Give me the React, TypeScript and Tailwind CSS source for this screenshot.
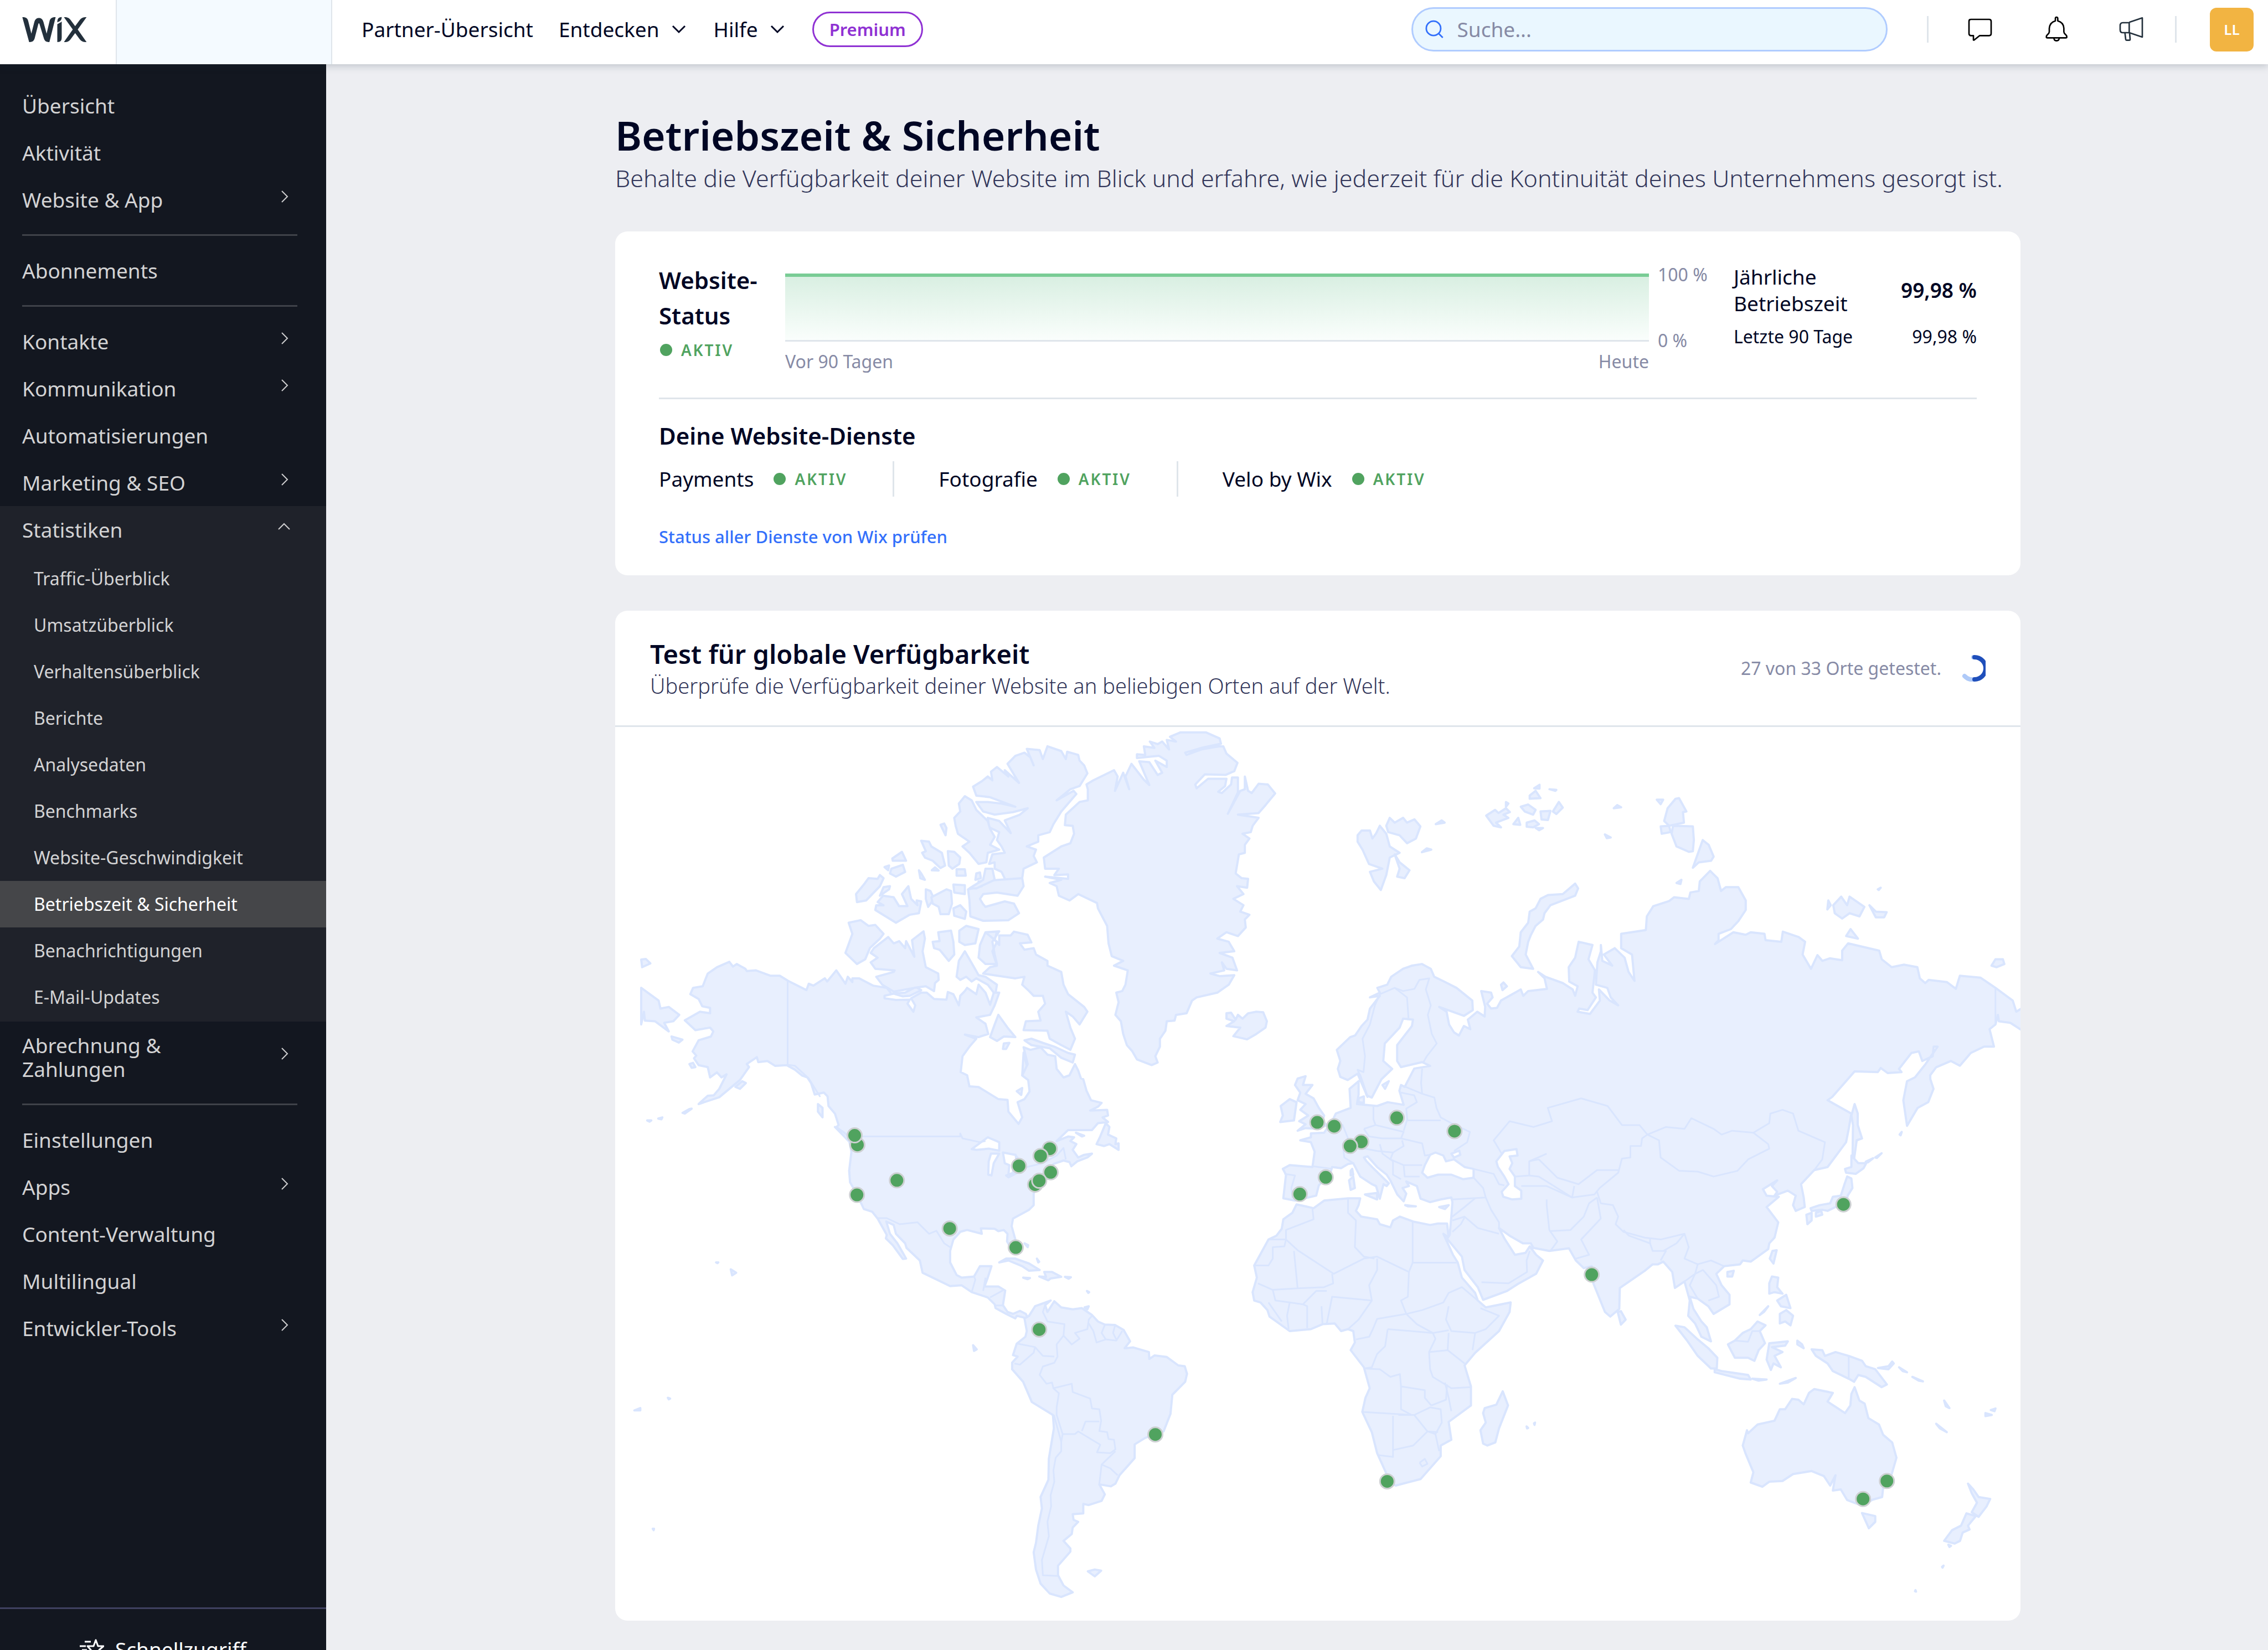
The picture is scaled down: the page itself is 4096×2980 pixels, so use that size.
import React from "react";

/* ---------- World map data ---------- */

type Tile = { x: number; y: number; sx: number; sy: number };

// Outlines are digitised in four quadrants; each has its own origin and scale on the map.
const TILES: Record<string, Tile> = {
  nw: { x: -11, y: -232, sx: 0.829, sy: 0.574 },
  ne: { x: 1189, y: -232, sx: 0.893, sy: 0.574 },
  sw: { x: -11, y: 588, sx: 0.829, sy: 0.689 },
  se: { x: 1089, y: 588, sx: 0.957, sy: 0.689 },
};

function toPath(source: string, closed: boolean): string {
  let tile = TILES.nw;
  const points: string[] = [];
  for (const token of source.trim().split(/\s+/)) {
    if (TILES[token]) {
      tile = TILES[token];
      continue;
    }
    const [u, v] = token.split(",").map(Number);
    points.push(`${(tile.x + u * tile.sx).toFixed(1)} ${(tile.y + v * tile.sy).toFixed(1)}`);
  }
  return `M${points.join("L")}${closed ? "Z" : ""}`;
}

const LAND: string[] = [
  // North and Central America
  `nw 262,1143 270,1158 278,1150 297,1165 300,1172 320,1170 352,1187 372,1187 390,1203 430,1232 435,1212 445,1218 470,1195 475,1205 495,1170 515,1212 520,1190 530,1207 530,1195 545,1195 575,1218 605,1225 615,1243 645,1240 668,1222 680,1232 655,1250 640,1252 620,1243 600,1250 600,1258 625,1263 655,1262 650,1275 663,1300 667,1280 658,1258 680,1240 692,1240 708,1260 735,1262 738,1238 750,1245 762,1280 765,1250 775,1235 780,1225 800,1245 805,1215 820,1240 830,1278 838,1240 825,1215 800,1195 790,1205 778,1190 765,1200 757,1190 762,1140 775,1110 795,1160 805,1185 820,1190 845,1215 842,1240 850,1240 840,1280 830,1310 800,1318 820,1338 826,1370 805,1380 775,1372 800,1385 785,1410 770,1440 766,1490 780,1500 785,1535 805,1537
   sw 848,122 868,124 870,155 892,187 900,170 890,130 905,122 916,102 913,72 900,60 910,35 903,0
   nw 900,1500 912,1465 903,1412 918,1420 940,1412 955,1435 972,1440 975,1480 990,1507 1003,1500 1015,1465 1022,1485 1028,1510
   sw 1033,70 1040,100 1050,125 1073,132 1065,142 1048,152 1085,150 1087,165 1075,170 1087,182 1065,185 1052,203 1000,203 975,232 1000,220 1013,222 1005,232 1018,240 1010,255 1022,275 1035,268 1052,265 1042,275 1020,285 1007,298 1003,287 990,283 968,292 960,315 945,325 932,350 925,370 925,400 915,412 880,435 877,455 885,490 888,515 878,518 867,495 868,475 860,465 848,468 840,462 810,461 812,475 780,465 765,470 750,490 743,520 743,550 757,583 768,590 795,587 808,560 833,560 825,590 818,613 848,613 863,624 858,662 868,680 880,685 895,677 908,685 912,695 905,695 888,690 885,697 865,685 842,670 840,660 825,642 790,628 768,610 743,612 683,577 677,545 648,512 645,500 625,475 620,452 604,443 612,475 628,500 640,525 647,540 640,541 618,505 603,487 605,478 585,435 573,417 555,410 540,372 525,340 523,310 528,260 522,225 510,210 495,195 500,190 492,160 478,140 476,115 468,105 448,110 440,80 432,65 420,60 405,45 387,33 362,35 345,22 325,25 322,12 300,30 305,38 285,72 240,117 195,135 215,113 228,112 240,95 256,57 245,65 235,52 220,65 215,38 195,33 185,15 190,8
   nw 182,1425 195,1390 222,1378 227,1362 220,1350 188,1358 165,1327 198,1300 220,1305 220,1288 203,1283 195,1260 177,1245 183,1225 204,1220 215,1180 235,1160`,
  // Greenland
  `nw 1055,572 1100,540 1108,560 1102,605 1120,548 1133,600 1125,560 1138,520 1165,570 1177,587 1155,512 1177,515 1195,555 1205,548 1190,510 1215,530 1215,510 1198,495 1150,502 1150,490 1168,492 1165,465 1188,470 1178,450 1195,458 1205,450 1220,475 1215,445 1235,450 1222,435 1245,421 1300,421 1330,440 1333,457 1290,470 1255,485 1258,492 1290,475 1330,465 1338,465 1345,488 1369,517 1362,543 1343,555 1298,553 1277,585 1280,597 1305,567 1345,567 1342,590 1327,608 1335,612 1355,585 1357,563 1370,563 1370,610 1348,677 1375,605 1385,600 1385,560 1392,605 1400,612 1415,583 1435,585 1451,613 1430,650 1415,675 1370,680 1415,690 1402,715 1398,735 1380,740 1395,755 1385,775 1385,800 1372,805 1365,865 1378,880 1392,882 1390,910 1368,905 1382,930 1360,945 1382,965 1375,985 1395,995 1385,1010 1387,1035 1370,1062 1345,1050 1325,1070 1350,1080 1362,1110 1330,1115 1358,1130 1368,1170 1345,1165 1335,1145 1340,1170 1310,1180 1330,1188 1362,1185 1350,1215 1325,1240 1280,1255 1270,1265 1258,1305 1235,1310 1232,1328 1215,1330 1212,1360 1200,1385 1200,1410 1190,1440 1195,1460 1182,1468 1150,1450 1140,1425 1128,1405 1120,1370 1115,1330 1103,1310 1110,1270 1105,1240 1118,1235 1125,1215 1130,1170 1100,1155 1120,1140 1095,1125 1088,1085 1085,1030 1065,975 1063,958 1022,930 1003,950 980,935 975,905 960,895 985,885 950,875 1000,882 1000,868 970,870 980,850 950,850 947,815 985,780 1005,770 1013,740 1010,715 993,713 995,680 1025,640 1043,635 1043,600 1040,585`,
  // Ellesmere Island
  `nw 793,592 812,575 825,560 835,572 832,545 845,530 870,560 862,540 893,580 868,520 885,495 905,485 918,500 925,525 910,473 938,477 945,505 955,465 985,480 995,505 998,482 1022,492 1025,510 1035,525 1042,550 1025,590 1005,600 975,635 1012,605 1018,615 985,670 968,710 960,735 935,745 935,765 910,780 930,790 925,810 932,830 903,850 900,880 885,885 865,890 855,860 840,850 840,830 828,835 835,805 862,800 855,780 845,760 850,735 828,720 825,690 850,700 875,738 862,698 895,680 912,660 880,672 840,680 815,670 800,640 825,640 855,645 885,655 830,625 800,620`,
  // Axel Heiberg
  `nw 775,622 790,635 800,665 825,700 830,725 840,750 830,775 850,790 825,800 822,830 805,835 785,800 770,780 785,765 760,740 755,715 752,690 765,670 762,645`,
  // Devon
  `nw 782,915 812,905 805,890 850,885 900,880 903,905 890,935 845,925 815,930 808,945 815,962 820,970 862,953 882,960 893,990 870,1012 815,1014 787,1000 785,950`,
  `nw 820,850 835,850 840,885 800,912 785,912 815,885`,
  `nw 800,865 808,862 810,880 798,885`,
  // Arctic archipelago
  `nw 680,762 697,765 702,780 725,800 732,840 722,848 705,825 688,815 682,800 690,795`,
  `nw 738,795 752,797 765,815 763,835 748,850 740,840`,
  `nw 757,852 775,852 777,872 757,872`,
  `nw 675,855 680,865 688,885 678,880`,
  `nw 703,855 710,846 718,856`,
  `nw 722,712 730,708 735,722 733,745`,
  `nw 617,818 638,797 647,825 618,825`,
  `nw 615,850 640,838 645,860 625,875 612,865`,
  `nw 600,845 610,840 608,855`,
  `nw 538,930 555,900 565,880 585,882 590,870 598,880 590,905 560,950 540,955`,
  `nw 598,908 612,905 610,915 590,935`,
  `nw 597,935 620,940 632,968 650,968 638,930 652,905 658,945 672,965 670,950 680,953 675,990 655,995 625,1020 580,980 582,965 598,965 585,955`,
  `nw 690,915 700,920 708,945 695,970 690,945`,
  `nw 702,940 735,915 745,920 747,960 740,993 722,993 718,970 705,960`,
  `nw 750,900 775,902 775,930 752,925`,
  `nw 750,975 765,965 778,985 775,1008 752,998`,
  // Banks Island
  `nw 522,1020 548,1012 565,1030 580,1027 598,1055 590,1070 568,1100 558,1135 540,1150 515,1115 530,1055`,
  // Victoria Island
  `nw 577,1100 608,1065 620,1085 632,1078 645,1100 647,1078 665,1127 660,1075 685,1047 688,1070 683,1110 690,1160 717,1180 718,1200 710,1210 708,1235 690,1220 665,1225 620,1237 595,1215 582,1190 620,1175 622,1170 580,1165 570,1145 585,1130 570,1115`,
  // Prince of Wales and Somerset
  `nw 717,1050 745,1045 750,1080 752,1120 740,1140 720,1105 708,1100 705,1080 720,1078`,
  `nw 763,1045 778,1030 805,1040 798,1085 775,1090 763,1080`,
  // Baffin Island
  `nw 820,1050 850,1047 835,1080 840,1120 845,1150 820,1150 805,1130 808,1090
   nw 820,1050 845,1048 840,1075 850,1090 850,1060 875,1060 882,1048 912,1058 920,1082 895,1085 905,1105 925,1100 930,1120 955,1140 955,1155 985,1175 990,1215 1000,1245 1035,1285 1042,1300 1025,1340 1010,1315 995,1300 1005,1350 1015,1385 1005,1420 985,1405 960,1385 955,1360 903,1358 908,1330 940,1328 935,1300 950,1275 945,1250 925,1250 915,1235 900,1215 905,1190 885,1195 815,1180 830,1160 845,1155 835,1110 845,1080`,
  `nw 830,1380 840,1340 848,1310 868,1350 885,1380 860,1378 845,1392`,
  `nw 860,1400 872,1398 865,1417 858,1417`,
  `nw 905,1390 920,1385 945,1398 970,1410 1000,1430 1015,1435 1010,1460 985,1445 960,1415 920,1405`,
  `nw 888,1550 900,1540 898,1562`,
  // Chukotka edge and Bering islands
  `nw 70,1225 108,1265 112,1290 130,1285 153,1310 140,1330 120,1335 130,1362 100,1330 78,1328 76,1300 70,1340`,
  `nw 70,1136 80,1134 90,1148 72,1160`,
  `nw 136,1378 160,1388 152,1397 138,1388`,
  `sw 175,30 183,27 188,38 180,40`,
  `sw 275,90 290,75 298,80 285,95`,
  `sw 160,158 175,148 180,147 165,160`,
  `sw 83,178 92,178 88,181`,
  `sw 107,173 116,170 114,175`,
  `sw 455,135 465,145 465,170 455,155`,
  `sw 492,195 510,208 530,228 522,232`,
  // Newfoundland
  `sw 1062,240 1070,220 1082,185 1090,195 1087,215 1105,225 1103,240 1110,238 1110,255 1090,240 1078,245`,
  `sw 1017,210 1035,218 1030,220`,
  // Caribbean
  `sw 850,550 865,540 885,540 915,553 938,570 915,572 900,560 870,545`,
  `sw 902,590 917,591 912,594`,
  `sw 937,587 952,588 948,575 965,575 985,588 962,592 957,597`,
  `sw 993,588 1006,589 1001,593`,
  `sw 905,500 913,505 912,510`,
  `sw 932,540 937,548 935,550`,
  `sw 1041,625 1046,628 1044,630`,
  `sw 1036,668 1045,665 1042,673`,
  // Hawaii, Galapagos and Pacific
  `sw 265,568 277,577 268,584`,
  `sw 233,550 238,550 236,552`,
  `sw 793,767 801,778 795,782`,
  `sw 55,938 68,932 68,938`,
  `sw 128,905 133,907 130,909`,
  `sw 95,1248 98,1248 97,1252`,
  // South America
  `sw 915,690 928,665 962,650 950,662 955,680 970,652 985,668 1010,673 1030,670 1052,688 1065,705 1080,713 1102,714 1121,727 1135,757 1123,775 1142,773 1176,785 1177,803 1188,794 1215,798 1240,820 1254,822 1259,842 1255,863 1227,897 1223,947 1208,993 1168,1010 1145,1027 1145,1063 1112,1108 1103,1130 1093,1137 1068,1132 1080,1158 1073,1175 1045,1186 1033,1183 1033,1208 1010,1210 1012,1225 1022,1230 1010,1245 1008,1262 990,1280 1005,1300 1005,1308 978,1345 978,1370 990,1397 1010,1415 985,1427 960,1418 940,1392 930,1355 925,1310 930,1285 935,1240 943,1195 940,1165 957,1120 958,1065 969,985 967,950 921,916 902,863 878,830 878,813 890,797 880,793 888,763 907,745 910,730 905,697`,
  `sw 1043,1360 1058,1355 1072,1358 1058,1373`,
  // Iceland
  `nw 1345,1305 1355,1303 1365,1325 1370,1310 1380,1322 1392,1305 1410,1300 1425,1302 1433,1330 1430,1350 1410,1370 1390,1387 1360,1377 1375,1350 1345,1345 1362,1330 1345,1322`,
  // Africa
  `se 148,398 165,403 180,408 200,388 245,382 268,382 265,400 260,415 270,430 300,437 305,450 325,458 330,440 343,430 368,443 400,452 415,448 432,448 435,485 425,475 443,530 452,550 460,590 485,630 490,650 505,668 552,655 550,680 530,730 485,787 465,820 477,875 477,925 435,968 440,1015 420,1030 420,1058 382,1118 335,1135 328,1130 318,1105 300,1050 290,995 272,942 278,905 286,880 275,825 250,780 258,760 255,730 245,725 232,730 220,710 197,712 175,725 135,730 97,692 93,675 80,655 68,650 65,628 73,590 68,558 95,490 110,480 120,462 123,437 140,420`,
  `se 503,932 525,923 537,888 547,925 530,985 523,1022 508,1030 500,1025 495,990 505,970 500,945`,
  // Eurasia
  `ne 190,1568 170,1495 150,1515 135,1505 130,1480 135,1455 128,1420 155,1380 165,1375 178,1345 190,1325 195,1290 205,1270 215,1250 195,1255 215,1240 210,1225 230,1215 238,1190 262,1165 280,1155 300,1150 318,1165 325,1190 345,1205 370,1225 402,1265 403,1295 385,1313 335,1285 350,1300 355,1340 365,1365 375,1375 385,1345 398,1355 393,1325 412,1300 427,1315 428,1285 420,1235 440,1240 443,1255 432,1275 440,1290 452,1288 460,1265 500,1230 505,1250 515,1235 553,1228 548,1195 535,1175 550,1190 585,1210 605,1230 610,1250 615,1220 598,1205 597,1160 610,1130 617,1080 645,1090 637,1135 650,1170 645,1240 652,1255 635,1295 618,1290 615,1300 640,1307 660,1265 658,1230 680,1265 697,1280 682,1255 675,1225 652,1215 655,1145 662,1110 662,1090 665,1140 685,1155 668,1120 690,1100 710,1130 718,1175 730,1203 725,1120 703,1100 703,1055 753,1043 755,1000 768,968 800,952 810,940 840,945 843,925 860,920 862,890 883,857 898,880 905,920 915,908 940,908 955,950 955,980 940,1015 925,1040 900,1055 900,1075 893,1087 930,1050 955,1058 965,1050 993,1055 995,1075 1027,1080 1030,1048 1062,1065 1075,1080 1070,1120 1087,1165 1100,1122 1110,1140 1125,1132 1150,1138 1150,1108 1162,1085 1225,1108 1230,1135 1250,1160 1275,1152 1302,1160 1307,1195 1318,1210 1325,1200 1362,1207 1380,1228 1388,1187 1430,1193 1460,1225 1495,1265 1502,1300 1520,1282 1520,1365 1490,1335 1467,1330 1465,1310 1460,1340 1448,1355 1457,1410 1437,1410 1410,1430 1388,1470 1370,1455 1340,1475 1328,1500
   se 1344,70 1350,95 1340,130 1320,145 1300,192 1293,125 1300,75 1315,65 1335,30
   ne 1343,1410 1335,1410 1333,1440 1312,1455 1305,1425 1290,1430 1265,1480 1270,1490 1242,1493 1228,1477 1222,1490 1175,1488 1130,1568
   se 1150,125 1195,160 1190,200 1185,235 1150,300 1125,308 1110,330 1100,345 1105,380 1107,405 1090,415 1085,400 1090,375 1075,362 1050,375 1055,365 1045,350 1055,335 1028,358 1035,375 1058,378 1035,405 1057,445 1050,485 1040,500 1038,515 1005,548 990,545 985,555 955,560 940,580 950,610 965,635 965,660 935,685 925,665 905,645 890,640 897,672 912,705 922,720 930,757 912,745 900,710 887,690 890,650 880,600 862,617 857,575 840,548 830,555 820,555 805,572 758,617 757,672 740,692 730,680 708,605 705,560 690,565 675,545 662,513 625,520 595,512 590,500 575,500 550,480 530,460 540,487 560,530 580,525 588,508 600,530 613,545 600,580 565,607 545,625 500,648 490,615 465,570 460,535 432,488 437,478 440,430 442,392 440,380 420,385 400,392 382,383 375,350 355,338 360,350 348,355 355,370 350,390 338,372 325,335 318,320 300,300 282,272 275,275 280,285 292,302 322,343 318,350 312,345 305,383 298,350 290,345 268,325 255,290 245,292 232,303 215,300 212,315 190,348 185,375 145,388 123,382 128,320 122,305 135,295 178,300 182,260 175,235 155,230 175,222 175,212 200,210 215,180 222,160 250,145 248,95 265,75 265,110 262,135 300,140 320,130 350,137 342,100 345,85 352,90 370,42 400,35 385,25 345,38
   ne 250,1455 250,1405 280,1345 282,1325 262,1322 255,1350 225,1400 222,1455 240,1480
   se 308,70 290,118 280,112 268,60`,
  // Svalbard
  `ne 170,745 178,730 195,730 200,755 207,740 215,715 228,740 235,780 255,800 235,815 228,870 217,917 203,890 195,860 220,850 193,835 180,790 170,765`,
  `ne 228,715 235,690 245,705 262,690 270,705 285,695 297,717 288,755 270,770 255,745 232,735`,
  `ne 245,805 255,830 275,855 265,880 250,875 255,850`,
  // Barents and Kara sea islands
  `ne 328,710 340,698 346,705`,
  `ne 300,798 310,786 319,790`,
  `ne 430,683 448,665 455,675 470,660 478,672 465,680 475,690 450,705 460,720 445,715`,
  `ne 500,655 515,648 530,665 525,680 508,670`,
  `ne 540,670 560,668 555,697 542,695`,
  `ne 512,705 528,698 537,710 525,720 512,718`,
  `ne 565,670 577,640 585,658 572,678`,
  `ne 518,620 530,605 540,628 518,630`,
  `ne 527,597 538,586 538,598`,
  `ne 470,640 475,645 470,655`,
  `ne 485,710 495,690 499,712`,
  `ne 558,600 572,602 570,605`,
  `ne 530,722 545,722 537,729`,
  `ne 688,660 695,650 703,657`,
  `ne 670,742 682,752 674,754`,
  `ne 775,633 788,633 783,647`,
  `ne 813,630 820,628 835,670 828,672 830,705 800,715 790,700 797,660`,
  `ne 783,717 800,715 803,735 785,740`,
  `ne 808,715 848,717 850,760 848,795 840,797 815,780 805,740`,
  `ne 868,760 880,775 890,812 885,825 860,830 848,847`,
  `ne 815,895 825,885 823,898`,
  `ne 610,897 616,912 610,935 560,965 548,990 545,1010 530,1030 520,1060 515,1080 510,1120 525,1165 500,1160 482,1125 497,1095 500,1050 515,1020 518,985 530,975 540,945 555,933 585,930`,
  `ne 460,1215 465,1208 472,1220 463,1232`,
  // New Siberian Islands and Wrangel
  `ne 1132,965 1148,938 1160,965 1165,938 1195,970 1185,1000 1165,990 1150,1007 1135,990`,
  `ne 1205,965 1218,985 1240,987 1235,1003 1218,1003`,
  `ne 1122,950 1127,965 1120,978`,
  `ne 1158,1062 1167,1040 1182,1070`,
  `ne 1452,1155 1460,1135 1475,1135 1478,1150 1462,1160`,
  `ne 1222,915 1228,910 1224,917`,
  // British Isles
  `se 150,68 165,62 160,85 178,85 165,108 180,120 190,145 200,165 197,180 205,190 190,200 165,198 150,205 165,188 153,180 170,165 155,150 165,135 150,125 155,105 145,85`,
  `se 118,140 135,122 148,130 143,178 117,182 122,165`,
  `se 247,335 255,325 258,355 250,360`,
  `se 277,372 300,368 300,385`,
  `se 250,310 253,305 255,320 250,322`,
  `se 353,400 373,403 358,403`,
  `se 417,405 435,400 428,410`,
  `se 265,120 275,115 275,132 265,130`,
  `se 310,85 322,75 315,95`,
  // Sakhalin, Kurils, Japan, Taiwan
  `se 1201,135 1207,160 1207,190 1215,225 1205,230 1200,280 1197,292 1198,190 1195,165`,
  `se 1222,286 1236,277 1226,288`,
  `se 1240,275 1252,264 1243,276`,
  `se 1286,215 1290,208 1288,217`,
  `se 1195,270 1208,290 1223,290 1218,303 1203,318 1185,315 1183,305 1195,300`,
  `se 1187,325 1195,330 1197,355 1188,375 1185,400 1165,405 1150,415 1140,412 1120,415 1118,408 1135,400 1155,395 1160,378 1175,375 1182,345`,
  `se 1110,425 1120,420 1120,440 1112,450`,
  `se 1128,420 1138,415 1140,425 1128,430`,
  `se 1046,520 1054,518 1048,553 1041,540`,
  `se 961,575 973,572 970,587 961,587`,
  `se 754,680 760,678 769,700 760,713`,
  // Philippines
  `se 1045,587 1057,590 1055,615 1065,632 1050,628 1040,632 1040,605`,
  `se 1060,685 1072,675 1085,690 1080,715 1070,705 1060,710`,
  `se 1055,650 1072,635 1080,670 1062,665`,
  `se 1022,688 1038,665 1030,680`,
  // Indonesia and New Guinea
  `se 863,716 880,720 905,752 925,775 942,800 941,828 930,828 905,795 885,755`,
  `se 937,830 950,835 975,840 1000,845 1005,857 985,855 937,838`,
  `se 1008,855 1035,857 1020,860`,
  `se 1060,868 1090,853 1075,865`,
  `se 1018,705 1033,715 1022,730 1032,762 1020,780 1012,808 1000,800 975,800 962,765 975,755 990,735 1005,725`,
  `se 1040,762 1075,757 1070,768 1045,772 1065,785 1050,795 1062,825 1048,815 1043,832 1035,805`,
  `se 1093,755 1102,765 1105,775 1093,765`,
  `se 1120,778 1140,780 1145,795 1165,785 1190,795 1215,808 1222,822 1240,830 1262,870 1252,877 1222,850 1208,845 1200,863 1190,855 1160,835 1150,815 1128,795`,
  `se 1245,827 1265,822 1272,810 1275,815 1265,830`,
  `se 1285,825 1300,838 1292,835`,
  `se 1310,850 1330,862 1322,860`,
  // Australia and New Zealand
  `se 1201,877 1210,912 1220,920 1227,958 1247,975 1255,1002 1272,1022 1280,1062 1270,1110 1255,1140 1253,1165 1235,1172 1215,1188 1187,1173 1175,1145 1160,1148 1165,1108 1155,1135 1143,1110 1120,1097 1085,1105 1065,1123 1040,1125 1027,1138 1005,1127 1010,1100 995,1050 990,1030 998,990 1000,998 1018,975 1050,965 1060,935 1070,935 1083,908 1095,910 1105,922 1115,892 1125,882 1160,892 1150,915 1183,945 1193,925 1195,895`,
  `se 1215,1207 1240,1215 1240,1230 1228,1247`,
  `se 1415,1130 1425,1145 1435,1165 1457,1170 1450,1190 1435,1217 1422,1205 1432,1180 1422,1155`,
  `se 1412,1208 1430,1215 1415,1240 1418,1250 1405,1258 1400,1280 1390,1287 1370,1280 1385,1252 1402,1240`,
  `se 1355,973 1375,995 1362,985`,
  `se 1370,912 1380,932 1373,927`,
  `se 1448,945 1460,950 1448,953`,
  `se 1458,937 1467,933 1465,940`,
  `se 1378,1290 1383,1293 1380,1296`,
  `se 1366,1348 1369,1345 1367,1350`,
  `se 1316,1409 1317,1413 1315,1412`,
  `se 582,980 585,984 583,985`,
  `se 596,972 598,970 597,976`,
];

const WATER: string[] = [
  // Black Sea, Sea of Azov, Caspian Sea
  `se 385,315 390,295 400,268 410,262 425,270 430,285 445,280 465,300 482,305 482,328 462,332 440,320 415,320 395,328`,
  `se 440,265 455,257 457,268 445,275`,
  `se 525,285 540,258 563,253 565,270 550,272 555,290 550,305 560,325 560,350 572,362 572,383 555,385 538,378 535,365 548,345 540,325 528,300`,
  // Great Lakes
  `sw 790,253 825,222 850,235 850,257 828,252 800,255`,
  `sw 832,265 850,265 838,290 833,322 826,320 827,285`,
  `sw 858,262 885,268 895,285 880,300 880,315 870,320 872,295 862,290`,
  `sw 865,322 895,312 870,327`,
];

const BORDERS: string[] = [
  // North and Central America
  `nw 389,1203 389,1467 405,1470 435,1510 460,1568`,
  `sw 523,220 765,220 765,212 770,225 808,235 820,232`,
  `sw 885,265 888,300 910,300 945,290 975,270 990,250 995,280`,
  `sw 585,434 605,434 633,450 672,445 697,475 713,467 730,500 743,510`,
  `sw 790,628 798,595 795,587`,
  `sw 815,625 820,590`,
  `sw 830,642 860,622`,
  `sw 842,663 858,663`,
  // South America
  `sw 950,662 945,680 955,705 992,712 990,742 1008,765 1025,750 1015,735 1042,725 1045,700 1052,690`,
  `sw 1045,710 1055,730 1062,760 1082,752 1105,755 1118,730`,
  `sw 1080,714 1073,735 1082,752`,
  `sw 1102,716 1098,735 1105,752`,
  `sw 990,742 975,765 977,797 970,813 945,823 938,845 953,868 965,865 968,880 1008,868 1010,890 1048,907 1052,933 1068,935 1072,965 1068,992 1085,995 1088,1013 1100,1015 1103,1040 1092,1050 1063,1048 1070,1028 1022,993 1015,1000 988,1000 985,1020`,
  `sw 890,763 928,772 945,795 970,797`,
  `sw 928,772 925,787 895,818 883,815`,
  `sw 968,880 980,893 975,930 975,950 988,1000`,
  `sw 1030,992 1038,967 1068,967`,
  `sw 1103,1045 1073,1080 1068,1130`,
  `sw 1073,1080 1092,1090 1108,1108`,
  `sw 969,950 985,1020 985,1045 973,1062 968,1095 970,1125 962,1160 963,1190 955,1230 958,1268 943,1330 945,1370 978,1372`,
  // Europe
  `se 268,60 263,45
   ne 182,1490 185,1440 180,1385 195,1340 205,1280 215,1245 245,1225 270,1255 273,1322`,
  `ne 245,1225 262,1235 285,1228 295,1200 315,1195 308,1230 318,1280 312,1310 320,1370 330,1400 310,1440 302,1462`,
  `se 385,42 383,80 385,108 408,118 412,145 420,170 440,185 475,208 470,235 445,258`,
  `se 345,85 385,108`,
  `se 345,105 370,112 375,130 355,147 357,175 350,205`,
  `se 357,178 420,178`,
  `se 293,140 293,175 297,190 350,208 345,225`,
  `se 220,180 235,190 245,225 235,240 238,275 255,290`,
  `se 275,200 297,190`,
  `se 275,200 285,220 310,225 345,225 385,238 390,270 400,268`,
  `se 238,255 270,250 300,258 330,262 350,245 347,230`,
  `se 330,262 325,280 350,295 385,295`,
  `se 305,240 310,265 330,285 330,320 345,332`,
  `se 350,295 352,325 380,325`,
  `se 178,298 215,305`,
  `se 125,318 145,322 138,355 140,382`,
  // Middle East and Asia
  `se 442,385 505,380 500,355 482,328`,
  `se 482,305 520,318 530,345 540,348`,
  `se 505,380 515,412 530,445 530,462`,
  `se 442,430 465,405 485,382`,
  `se 442,440 465,430 490,460 530,475`,
  `se 442,470 458,450 465,432`,
  `se 497,602 548,605 583,575 582,545 588,520`,
  `se 535,265 520,230 550,180 595,195 630,180 622,145 685,120 735,140 762,190 795,190 810,215`,
  `se 560,325 587,322 587,285 620,265`,
  `se 587,285 605,280 640,328 680,345 715,308 755,308`,
  `se 587,322 605,325 668,380 672,350`,
  `se 572,350 620,350 668,380 710,372 720,355 755,315 762,278 778,275 778,245 798,245 800,225 810,215`,
  `se 620,385 620,400 625,465 640,495 628,518`,
  `se 625,468 665,465 690,430 700,395 715,380`,
  `se 715,380 722,435 685,490 700,530 675,540`,
  `se 715,365 722,395 745,400 755,430 750,450 765,470 805,485 835,490 880,475`,
  `se 765,465 775,480 815,500 815,485`,
  `se 815,500 820,520 845,520 835,545`,
  `se 810,215 832,230 835,275 870,310 905,312 935,325 980,310 1000,280 1040,252 1038,240 1010,210 970,205 950,215 935,200 893,172 880,200 845,195 810,215`,
  `se 1010,210 1040,185 1042,160 1065,150 1085,160 1095,205 1145,235 1140,280 1125,308`,
  `se 840,520 865,500 880,475 888,510 880,540 905,555 930,545 955,560`,
  `se 880,600 900,580 915,570 940,610 945,640 925,650`,
  `se 905,555 900,580 890,610 905,645`,
  // Africa
  `se 245,382 245,420 260,440 258,510 275,535 295,540`,
  `se 367,443 367,551 450,551`,
  `se 367,551 360,575 300,535 275,540 218,580 150,518 128,490 128,465 180,437 178,410`,
  `se 95,490 128,490 125,508 103,510 103,540 95,558 68,558`,
  `se 143,520 150,618 103,622 75,605`,
  `se 150,618 200,615 217,605 215,580`,
  `se 360,575 358,640 345,650 355,685 300,698 292,725 285,745 260,752`,
  `se 300,540 300,570 285,610 290,650 265,700 245,725`,
  `se 103,622 108,650 135,655 160,660 185,625 205,625`,
  `se 160,660 168,665 168,722`,
  `se 195,665 197,712`,
  `se 205,710 215,640 290,650`,
  `se 135,655 130,690 133,725`,
  `se 95,655 110,685 120,705`,
  `se 355,685 385,675 425,655 435,630 460,615 490,650`,
  `se 435,665 430,700 440,730 485,735 505,725 530,690 495,670`,
  `se 355,685 375,712 405,735 435,728`,
  `se 405,735 410,750 398,785 400,830 405,850 440,880 477,877`,
  `se 398,785 433,780 465,815`,
  `se 433,780 435,735`,
  `se 485,735 480,780`,
  `se 320,725 315,770 300,790 290,825 275,828`,
  `se 320,725 405,735`,
  `se 275,828 305,830 325,850 343,843 345,875 390,885 390,905 402,925`,
  `se 345,875 345,935 365,950 272,942`,
  `se 330,952 330,1060 302,1055`,
  `se 340,950 370,950 395,993 415,995`,
  `se 370,950 400,930 420,935 422,970 410,1000 395,993 368,1030 330,1042`,
  `se 410,1000 417,1045`,
  `se 402,925 430,910 432,870`,
  `se 428,865 435,905 440,940`,
  `se 380,1075 390,1065 395,1078 385,1085 380,1075`,
  // Islands
  `se 975,755 1000,758 1008,730 1022,730`,
  `se 1190,795 1190,855`,
  `ne 1460,1225 1460,1340`,
];

const LOCATIONS: string[] = [
  "sw 541,242", "sw 535,217", "sw 627,335", "sw 540,373", "sw 742,461", "sw 886,511", "sw 893,297",
  "sw 960,252", "sw 940,271", "sw 962,314", "sw 928,346", "sw 937,336", "sw 937,726", "sw 1190,1001",
  "se 187,183", "se 219,193", "se 337,171", "se 446,206", "se 270,234", "se 249,245", "se 203,327",
  "se 154,371", "se 705,582", "se 1180,398", "se 1262,1123", "se 1217,1170", "se 319,1124",
];

function WorldMap() {
  return (
    <svg viewBox="0 0 2538 1614" className="block w-full" role="img" aria-label="Weltkarte der getesteten Orte">
      <g fill="#e8effe" stroke="#d9e5fe" strokeWidth={4} strokeLinejoin="round">
        {LAND.map((s, i) => (
          <path key={i} d={toPath(s, true)} />
        ))}
      </g>
      <g fill="#ffffff" stroke="#d9e5fe" strokeWidth={4} strokeLinejoin="round">
        {WATER.map((s, i) => (
          <path key={i} d={toPath(s, true)} />
        ))}
      </g>
      <g fill="none" stroke="#d9e5fe" strokeWidth={3} strokeLinejoin="round">
        {BORDERS.map((s, i) => (
          <path key={i} d={toPath(s, false)} />
        ))}
      </g>
      <g fill="#50a35f" stroke="#cdd0d2" strokeWidth={3}>
        {LOCATIONS.map((s) => {
          const [tile, point] = s.split(" ");
          const [u, v] = point.split(",").map(Number);
          const t = TILES[tile];
          return <circle key={s} cx={t.x + u * t.sx} cy={t.y + v * t.sy} r={13} />;
        })}
      </g>
    </svg>
  );
}

/* ---------- Icons ---------- */

function WixLogo() {
  return (
    <svg viewBox="118 88 352 141" className="h-[47px] w-[117px]" fill="#23303c" role="img" aria-label="Wix">
      <path d="M119 91C138 90 148 98 151 112L168 180L184 118C189 99 199 95 209 95C219 95 229 99 234 118L251 180L267 112C271 97 281 90 300 91L266 226C250 227 241 222 236 206L212 128Q209 120 206 128L186 206C181 222 172 227 156 226Z" />
      <path d="M333 90C317 91 309 98 309 119C320 113 333 112 333 90Z" />
      <path d="M309 129C318 123 327 121 333 114L333 200C333 220 326 226 309 226Z" />
      <path d="M345 91C362 90 372 94 381 106L406 140L431 106C440 94 451 90 468 91L420 158L468 226C451 227 440 223 431 211L406 177L381 211C372 223 362 227 345 226L393 158Z" />
    </svg>
  );
}

function ChevronDown() {
  return (
    <svg viewBox="0 0 26 16" className="h-4 w-[26px]" fill="none" stroke="#000624" strokeWidth={3} aria-hidden="true">
      <path d="M2 2L13 13L24 2" />
    </svg>
  );
}

function Chevron({ open }: { open?: boolean }) {
  return open ? (
    <svg viewBox="0 0 24 14" className="mb-3 h-[14px] w-6" fill="none" stroke="#cfcfd0" strokeWidth={2} aria-hidden="true">
      <path d="M2 12L12 2L22 12" />
    </svg>
  ) : (
    <svg viewBox="0 0 14 24" className="mb-3 mr-1 h-6 w-[14px]" fill="none" stroke="#cfcfd0" strokeWidth={2} aria-hidden="true">
      <path d="M2 2L12 12L2 22" />
    </svg>
  );
}

/* ---------- Sidebar ---------- */

type Item = { label: string; arrow?: boolean; children?: string[] };

const GROUPS: Item[][] = [
  [{ label: "Übersicht" }, { label: "Aktivität" }, { label: "Website & App", arrow: true }],
  [{ label: "Abonnements" }],
  [
    { label: "Kontakte", arrow: true },
    { label: "Kommunikation", arrow: true },
    { label: "Automatisierungen" },
    { label: "Marketing & SEO", arrow: true },
    {
      label: "Statistiken",
      children: [
        "Traffic-Überblick",
        "Umsatzüberblick",
        "Verhaltensüberblick",
        "Berichte",
        "Analysedaten",
        "Benchmarks",
        "Website-Geschwindigkeit",
        "Betriebszeit & Sicherheit",
        "Benachrichtigungen",
        "E-Mail-Updates",
      ],
    },
    { label: "Abrechnung & Zahlungen", arrow: true },
  ],
  [
    { label: "Einstellungen" },
    { label: "Apps", arrow: true },
    { label: "Content-Verwaltung" },
    { label: "Multilingual" },
    { label: "Entwickler-Tools", arrow: true },
  ],
];

function SidebarItem({ item }: { item: Item }) {
  return (
    <li className={item.children ? "bg-[#1f222a]" : ""}>
      <a
        href="#"
        className="flex items-center justify-between py-[21px] pl-10 pr-[64px] text-[37px] leading-[43px] text-[#d3d3d4]"
      >
        <span className="max-w-[370px]">{item.label}</span>
        {item.children ? <Chevron open /> : item.arrow ? <Chevron /> : null}
      </a>
      {item.children && (
        <ul className="pt-1 pb-0.5">
          {item.children.map((child) => (
            <li key={child}>
              <a
                href="#"
                className={
                  child === "Betriebszeit & Sicherheit"
                    ? "flex h-[84px] items-center bg-[#454649] pl-[61px] text-[32px] text-white"
                    : "flex h-[84px] items-center pl-[61px] text-[32px] text-[#d3d3d4]"
                }
              >
                {child}
              </a>
            </li>
          ))}
        </ul>
      )}
    </li>
  );
}

function Sidebar() {
  return (
    <aside className="flex w-[589px] shrink-0 flex-col bg-[#131720]">
      <nav className="flex-1 overflow-hidden pt-8" aria-label="Hauptmenü">
        {GROUPS.map((group, i) => (
          <React.Fragment key={i}>
            {i > 0 && <hr className="my-5 ml-10 mr-[52px] border-0 border-t-[3px] border-[#3f4249]" />}
            <ul>
              {group.map((item) => (
                <SidebarItem key={item.label} item={item} />
              ))}
            </ul>
          </React.Fragment>
        ))}
      </nav>
      <div className="h-[77px] overflow-hidden border-t-[3px] border-[#3f4161]">
        <a href="#" className="flex h-[146px] items-center justify-center gap-5 text-[37px] text-white">
          <svg viewBox="0 0 44 40" className="h-10 w-11" fill="none" stroke="currentColor" strokeWidth={3} strokeLinejoin="round" aria-hidden="true">
            <path d="M9 6H20M0 14H11M4 21H13" />
            <path d="M29 3L33 14H43L35 21L38 32L28 26L18 33L21 22L14 14H25Z" />
          </svg>
          Schnellzugriff
        </a>
      </div>
    </aside>
  );
}

/* ---------- Header ---------- */

function Header() {
  return (
    <header className="relative z-10 flex h-[116px] shrink-0 bg-white shadow-[0_2px_14px_rgba(22,45,61,0.25)]">
      <a href="#" className="flex w-[209px] items-start pl-10 pt-[30px]">
        <WixLogo />
      </a>
      <div className="w-[391px] border-x-[2px] border-[#dfe5eb] bg-[#f4faff]" />
      <nav className="flex h-[106px] items-center pl-[53px] text-[37px] text-[#000624]" aria-label="Navigation">
        <a href="#">Partner-Übersicht</a>
        <button type="button" className="ml-[46px] flex items-center gap-[22px]">
          Entdecken <ChevronDown />
        </button>
        <button type="button" className="ml-[50px] flex items-center gap-[22px]">
          Hilfe <ChevronDown />
        </button>
        <button
          type="button"
          className="ml-[50px] flex h-[64px] w-[200px] items-center justify-center rounded-full border-[3px] border-[#8f31d3] text-[31px] font-semibold text-[#8f31d3]"
        >
          Premium
        </button>
      </nav>
      <div className="ml-auto flex h-[106px] items-center pr-[26px]">
        <label className="flex h-[80px] w-[860px] items-center rounded-full border-[3px] border-[#b0ccff] bg-[#eaf7ff] pl-[22px]">
          <svg viewBox="0 0 36 36" className="h-9 w-9" fill="none" stroke="#3370fb" strokeWidth={3} aria-hidden="true">
            <circle cx="16" cy="16" r="14" />
            <path d="M26 26L34 34" />
          </svg>
          <input
            type="search"
            aria-label="Suche"
            placeholder="Suche..."
            className="ml-6 w-full bg-transparent text-[37px] outline-none placeholder:text-[#868aa5]"
          />
        </label>
        <span className="ml-[71px] h-[48px] w-[3px] bg-[#dfe5eb]" />
        <button type="button" aria-label="Nachrichten" className="ml-[71px]">
          <svg viewBox="311 54 132 144" className="h-12 w-11" fill="none" stroke="#000000" strokeWidth={8} strokeLinejoin="round">
            <path d="M328 72H426Q437 72 437 83V148Q437 160 426 160H375L345 184H341V160H328Q317 160 317 148V83Q317 72 328 72Z" />
          </svg>
        </button>
        <button type="button" aria-label="Benachrichtigungen" className="ml-[94px]">
          <svg viewBox="727 54 132 144" className="h-12 w-11" fill="none" stroke="#000000" strokeWidth={8} strokeLinejoin="round">
            <path d="M787 80V68Q787 60 793 60Q800 60 800 68V80Q831 88 833 120V140Q834 148 842 154Q849 160 849 167Q849 172 843 172H744Q738 172 738 167Q738 160 745 154Q753 148 754 140V120Q757 88 787 80Z" />
            <path d="M779 173Q780 188 793 188Q807 188 808 173" />
          </svg>
        </button>
        <button type="button" aria-label="Neuigkeiten" className="ml-[91px]">
          <svg viewBox="1128 54 132 144" className="h-12 w-11" fill="none" stroke="#23303c" strokeWidth={8} strokeLinejoin="round">
            <path d="M1183 90H1148Q1134 90 1134 106V128Q1134 144 1148 144H1183Z" />
            <path d="M1183 88L1254 64V168L1183 144" />
            <path d="M1160 146L1164 180Q1165 185 1170 185H1183Q1188 185 1188 180L1185 146" />
          </svg>
        </button>
        <span className="ml-[57px] h-[48px] w-[3px] bg-[#dfe5eb]" />
        <button type="button" aria-label="Konto" className="ml-[60px] flex h-[79px] w-[79px] items-center justify-center rounded-[12px] bg-[#f2b442] text-[26px] font-semibold text-white">
          LL
        </button>
      </div>
    </header>
  );
}

/* ---------- Cards ---------- */

function Active() {
  return (
    <span className="flex items-center gap-4 text-[28px] font-semibold leading-8 tracking-widest text-[#50a35f]">
      <span className="h-[22px] w-[22px] rounded-full bg-[#50a35f]" />
      AKTIV
    </span>
  );
}

function StatusCard() {
  return (
    <section className="rounded-[22px] bg-white px-[79px] pb-[46px] pt-[56px]">
      <div className="flex h-[247px] border-b-[3px] border-[#dfe5eb]">
        <div className="w-[228px] shrink-0">
          <h2 className="text-[42px] font-semibold leading-[64px]">
            Website-
            <br />
            Status
          </h2>
          <div className="mt-[14px] pl-[2px]">
            <Active />
          </div>
        </div>
        <div className="mt-5 flex-1 text-[32px] text-[#868aa5]">
          <div className="h-[123px] border-b-[3px] border-t-[6px] border-b-[#dfe5eb] border-t-[#79cc95] bg-linear-to-b from-[#d9efe2] to-[#fafefc]" />
          <div className="mt-3.5 flex justify-between leading-[44px]">
            <span>Vor 90 Tagen</span>
            <span>Heute</span>
          </div>
        </div>
        <div className="ml-4 flex h-[163px] w-[137px] shrink-0 flex-col justify-between text-[32px] leading-[44px] text-[#868aa5]">
          <span>100 %</span>
          <span>0 %</span>
        </div>
        <dl className="grid w-[439px] shrink-0 grid-cols-[1fr_auto] content-start items-center gap-y-[14px] pt-[2px]">
          <dt className="text-[37px] leading-[48px]">
            Jährliche
            <br />
            Betriebszeit
          </dt>
          <dd className="text-right text-[37px] font-semibold leading-[48px]">99,98 %</dd>
          <dt className="text-[32px] leading-[44px]">Letzte 90 Tage</dt>
          <dd className="text-right text-[32px] leading-[44px]">99,98 %</dd>
        </dl>
      </div>
      <h2 className="mt-[34px] text-[42px] font-semibold leading-[64px]">Deine Website-Dienste</h2>
      <ul className="mt-[14px] flex h-[64px] items-center text-[37px]">
        <li className="flex items-center gap-[36px]">
          Payments <Active />
        </li>
        <li className="ml-[82px] flex h-full items-center gap-[36px] border-l-[3px] border-[#dfe5eb] pl-[80px]">
          Fotografie <Active />
        </li>
        <li className="ml-[82px] flex h-full items-center gap-[36px] border-l-[3px] border-[#dfe5eb] pl-[80px]">
          Velo by Wix <Active />
        </li>
      </ul>
      <a href="#" className="mt-[48px] inline-block text-[31px] font-medium leading-[48px] text-[#3370fb]">
        Status aller Dienste von Wix prüfen
      </a>
    </section>
  );
}

function MapCard() {
  return (
    <section className="mt-16 overflow-hidden rounded-[22px] bg-white">
      <div className="flex h-[210px] items-center justify-between border-b-[3px] border-[#dfe5eb] px-[63px]">
        <div className="pt-0.5">
          <h2 className="text-[47px] font-semibold leading-[60px]">Test für globale Verfügbarkeit</h2>
          <p className="text-[38px] font-light leading-[54px] text-[#32365a]">
            Überprüfe die Verfügbarkeit deiner Website an beliebigen Orten auf der Welt.
          </p>
        </div>
        <div className="flex items-center gap-8 text-[32px] text-[#868aa5]">
          27 von 33 Orte getestet.
          <svg viewBox="0 0 48 48" className="h-12 w-12" fill="none" strokeWidth={8} strokeLinecap="round" aria-hidden="true">
            <path d="M27 4H26" stroke="#afcaf8" />
            <path d="M28 44A20 20 0 0 1 10 38" stroke="#afcaf8" />
            <path d="M28 4A20 20 0 0 1 28 44" stroke="#1f4fbb" />
          </svg>
        </div>
      </div>
      <WorldMap />
    </section>
  );
}

export default function App() {
  return (
    <div className="flex h-screen flex-col overflow-hidden font-['Noto_Sans',sans-serif] text-[#000624]">
      <Header />
      <div className="flex min-h-0 flex-1">
        <Sidebar />
        <main className="flex flex-1 justify-center bg-[#edeef2] pl-[75px]">
          <div className="w-full max-w-[2538px]">
            <h1 className="mt-[82px] text-[73px] font-semibold leading-[92px]">Betriebszeit &amp; Sicherheit</h1>
            <p className="mb-[64px] text-[43px] font-light leading-[64px] text-[#32365a]">
              Behalte die Verfügbarkeit deiner Website im Blick und erfahre, wie jederzeit für die Kontinuität deines Unternehmens
              gesorgt ist.
            </p>
            <StatusCard />
            <MapCard />
          </div>
        </main>
      </div>
    </div>
  );
}
